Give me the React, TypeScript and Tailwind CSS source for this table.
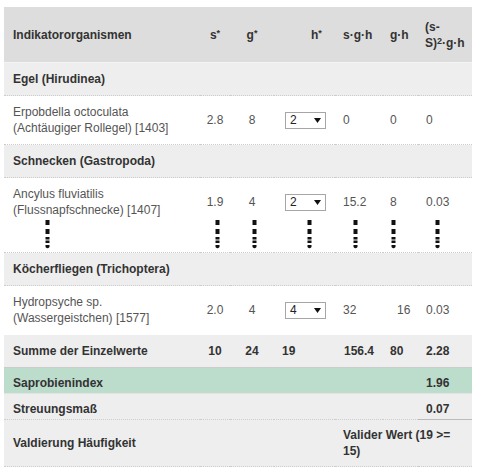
import React from "react";

interface Species {
  name: string;
  latin: string;
  s: string;
  g: string;
  h: string;
  sgh: string;
  gh: string;
  ghPad?: boolean;
  dev: string;
  more?: boolean;
}

interface Group {
  title: string;
  species: Species[];
}

const groups: Group[] = [
  {
    title: "Egel (Hirudinea)",
    species: [
      {
        latin: "Erpobdella octoculata",
        name: "(Achtäugiger Rollegel) [1403]",
        s: "2.8",
        g: "8",
        h: "2",
        sgh: "0",
        gh: "0",
        dev: "0",
      },
    ],
  },
  {
    title: "Schnecken (Gastropoda)",
    species: [
      {
        latin: "Ancylus fluviatilis",
        name: "(Flussnapfschnecke) [1407]",
        s: "1.9",
        g: "4",
        h: "2",
        sgh: "15.2",
        gh: "8",
        dev: "0.03",
        more: true,
      },
    ],
  },
  {
    title: "Köcherfliegen (Trichoptera)",
    species: [
      {
        latin: "Hydropsyche sp.",
        name: "(Wassergeistchen) [1577]",
        s: "2.0",
        g: "4",
        h: "4",
        sgh: "32",
        gh: "16",
        ghPad: true,
        dev: "0.03",
      },
    ],
  },
];

// vertical "und so weiter" marker under a row
const Marker = ({ className = "" }: { className?: string }) => (
  <svg width="5" height="30" viewBox="0 0 5 30" className={`block ${className}`}>
    <rect x="0.5" y="0" width="4" height="5" fill="#111" />
    <rect x="0.5" y="9" width="4" height="5" fill="#111" />
    <rect x="0.5" y="17" width="4" height="2.5" fill="#111" />
    <rect x="0.5" y="20.5" width="4" height="2.5" fill="#111" />
    <path d="M0.5 25 H4.5 V27 Q2.5 29.5 0.5 27 Z" fill="#111" />
  </svg>
);

const FakeSelect = ({ value }: { value: string }) => (
  <div className="inline-flex h-[17px] w-[41px] items-center justify-between border border-[#a6a6a6] bg-white pl-[4px] pr-[4px] leading-none text-[#222]">
    <span>{value}</span>
    <svg width="7" height="5" viewBox="0 0 7 5">
      <polygon points="0,0 7,0 3.5,5" fill="#111" />
    </svg>
  </div>
);

const rowLine = "border-b border-dotted border-[#ccc]";

const SpeciesRow = ({ sp }: { sp: Species }) => {
  if (sp.more) {
    return (
      <tr className={`${rowLine} align-top text-[#555]`}>
        <td className="pl-[9px] pt-2 pb-[2px]">
          <div>{sp.latin}</div>
          <div>{sp.name}</div>
          <Marker className="ml-[32px] mt-[2px]" />
        </td>
        <td className="pt-2 text-center">
          <div className="flex h-8 items-center justify-center">{sp.s}</div>
          <Marker className="mx-auto mt-[2px] translate-x-[2px]" />
        </td>
        <td className="pt-2 text-center">
          <div className="flex h-8 items-center justify-center">{sp.g}</div>
          <Marker className="mx-auto mt-[2px] translate-x-[2px]" />
        </td>
        <td className="pl-[11px] pt-2">
          <div className="flex h-8 items-center">
            <FakeSelect value={sp.h} />
          </div>
          <Marker className="ml-[22px] mt-[2px]" />
        </td>
        <td className="pl-[8px] pt-2">
          <div className="flex h-8 items-center">{sp.sgh}</div>
          <Marker className="ml-[10px] mt-[2px]" />
        </td>
        <td className="pl-[7px] pt-2">
          <div className="flex h-8 items-center">{sp.gh}</div>
          <Marker className="ml-[1px] mt-[2px]" />
        </td>
        <td className="pl-[8px] pt-2">
          <div className="flex h-8 items-center">{sp.dev}</div>
          <Marker className="ml-[9px] mt-[2px]" />
        </td>
      </tr>
    );
  }
  return (
    <tr className={`${rowLine} text-[#555]`}>
      <td className="py-2 pl-[9px]">
        <div>{sp.latin}</div>
        <div>{sp.name}</div>
      </td>
      <td className="text-center">{sp.s}</td>
      <td className="text-center">{sp.g}</td>
      <td className="pl-[11px]">
        <div className="flex items-center">
          <FakeSelect value={sp.h} />
        </div>
      </td>
      <td className="pl-[8px]">{sp.sgh}</td>
      <td className={sp.ghPad ? "pl-[14px]" : "pl-[7px]"}>{sp.gh}</td>
      <td className="pl-[8px]">{sp.dev}</td>
    </tr>
  );
};

export default function App() {
  return (
    <div className="min-h-[469px] w-[480px] bg-white pl-[4px] pt-[7px] font-['Liberation_Sans',Arial,sans-serif] text-[12px] leading-4">
      <table className="w-[468px] table-fixed border-collapse">
        <colgroup>
          <col className="w-[196px]" />
          <col className="w-[30px]" />
          <col className="w-[44px]" />
          <col className="w-[61px]" />
          <col className="w-[48px]" />
          <col className="w-[35px]" />
          <col className="w-[54px]" />
        </colgroup>
        <thead>
          <tr className="border-b border-[#f4f4f4] bg-[#ddd] text-left font-bold text-[#333]">
            <th className="pb-[11px] pl-[9px] pt-[12px]">Indikatororganismen</th>
            <th className="pb-[11px] pt-[12px] text-center">
              s<sup className="-top-[0.35em]">*</sup>
            </th>
            <th className="pb-[11px] pt-[12px] text-center">
              g<sup className="-top-[0.35em]">*</sup>
            </th>
            <th className="pb-[11px] pl-[37px] pt-[12px]">
              h<sup className="-top-[0.35em]">*</sup>
            </th>
            <th className="pb-[11px] pl-[8px] pt-[12px]">s·g·h</th>
            <th className="pb-[11px] pl-[7px] pt-[12px]">g·h</th>
            <th className="pb-[11px] pl-[7px] pt-[12px]">
              (s-S)<sup className="-top-[0.3em]">2</sup>·g·h
            </th>
          </tr>
        </thead>
        <tbody>
          {groups.map((grp) => (
            <React.Fragment key={grp.title}>
              <tr className={`${rowLine} bg-[#eee] font-bold text-[#333]`}>
                <td colSpan={7} className="py-2 pl-[9px]">
                  {grp.title}
                </td>
              </tr>
              {grp.species.map((sp) => (
                <SpeciesRow key={sp.latin} sp={sp} />
              ))}
            </React.Fragment>
          ))}

          <tr className="border-t border-white bg-[#eee] font-bold text-[#333]">
            <td className="py-2 pl-[9px]">Summe der Einzelwerte</td>
            <td className="text-center">10</td>
            <td className="text-center">24</td>
            <td className="pl-[8px]">19</td>
            <td className="pl-[9px]">156.4</td>
            <td className="pl-[7px]">80</td>
            <td className="pl-[8px]">2.28</td>
          </tr>
          <tr className="border-t border-[#ccc] border-b border-b-[#e4e4e4] bg-[#bcdccc] font-bold text-[#333]">
            <td colSpan={6} className="pb-[2px] pl-[9px] pt-[7px]">
              Saprobienindex
            </td>
            <td className="pb-[2px] pl-[8px] pt-[7px]">1.96</td>
          </tr>
          <tr className="bg-[#eee] font-bold text-[#333]">
            <td colSpan={6} className={`${rowLine} pb-[2px] pl-[9px] pt-[7px]`}>
              Streuungsmaß
            </td>
            <td className="border-b border-[#bbb] pb-[2px] pl-[8px] pt-[7px]">0.07</td>
          </tr>
          <tr className={`${rowLine} bg-[#eee] font-bold text-[#333]`}>
            <td colSpan={4} className="py-[7px] pl-[9px]">
              Valdierung Häufigkeit
            </td>
            <td colSpan={3} className="py-[7px] pl-[8px] pr-[8px]">
              Valider Wert (19 &gt;= 15)
            </td>
          </tr>
        </tbody>
      </table>
    </div>
  );
}
